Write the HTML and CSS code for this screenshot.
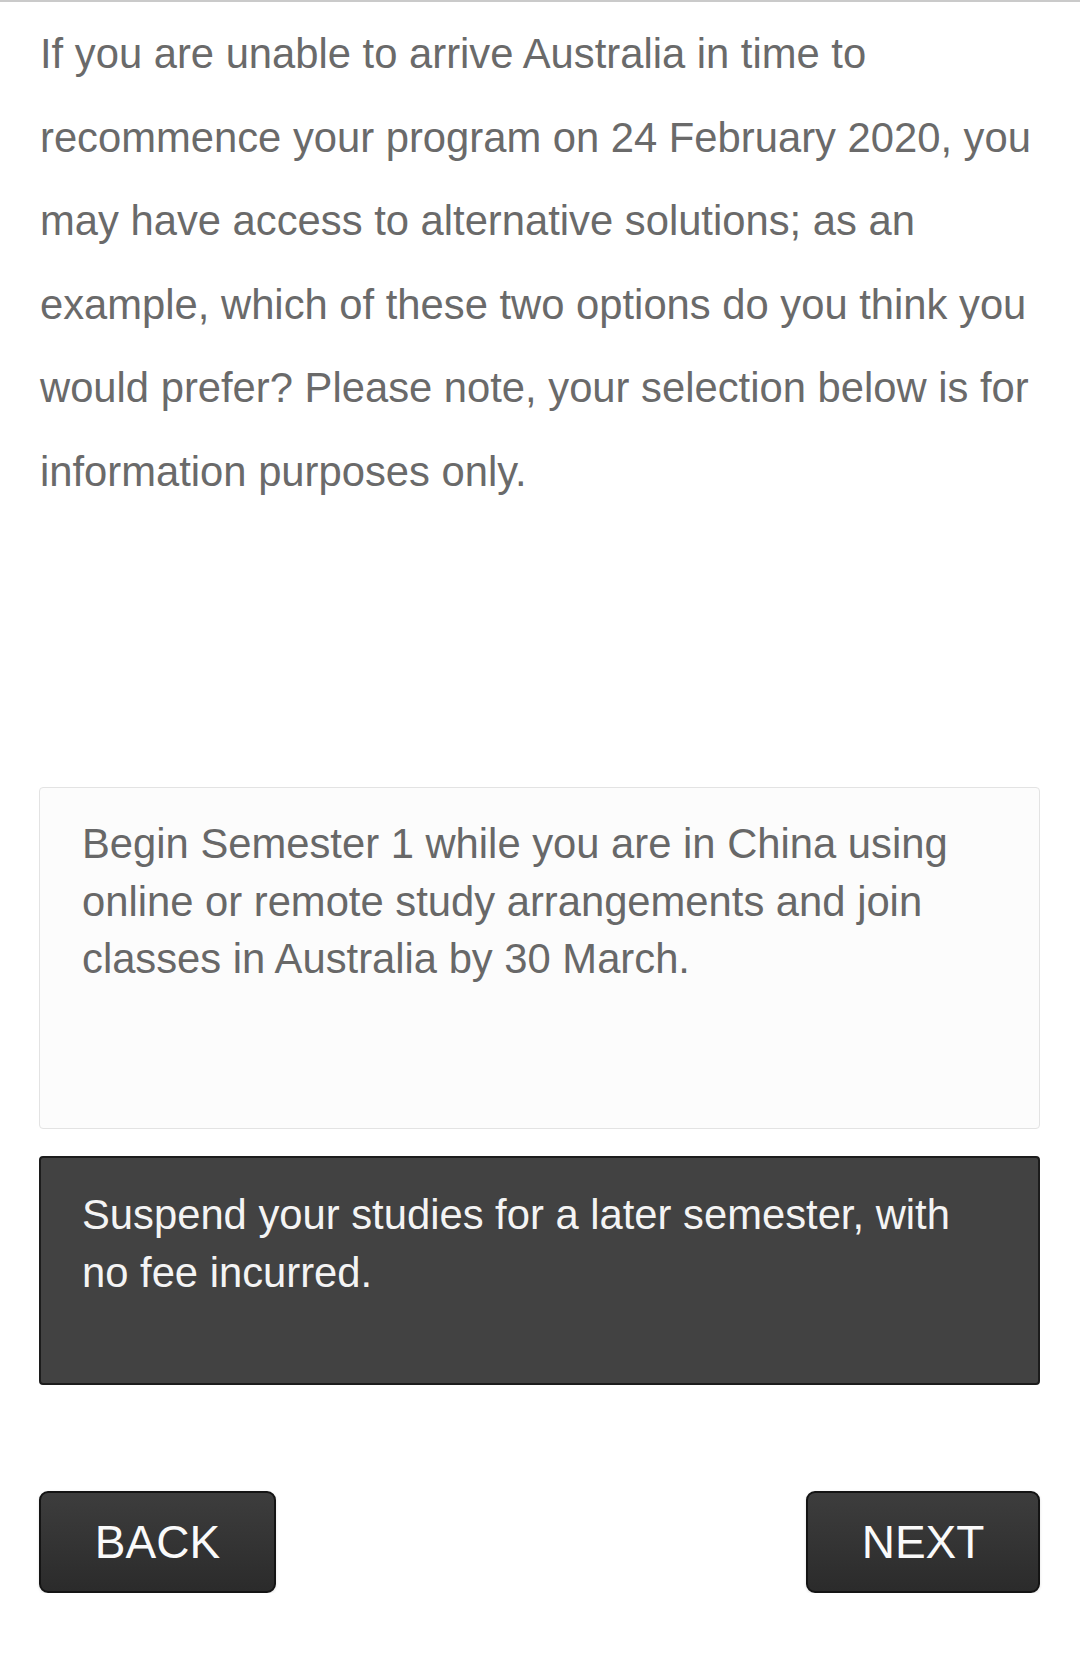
FILE: index.html
```html
<!DOCTYPE html>
<html lang="en">
<head>
  <meta charset="UTF-8">
  <meta name="viewport" content="width=device-width, initial-scale=1.0">
  <title>Semester Options</title>
  <link rel="stylesheet" href="styles.css">
</head>
<body>

  <div class="page">

    <!-- Question -->
    <p class="question">If you are unable to arrive Australia in time to recommence your program on 24 February 2020, you may have access to alternative solutions; as an example, which of these two options do you think you would prefer? Please note, your selection below is for information purposes only.</p>

    <!-- Options -->
    <div class="options">
      <div class="option option-first">Begin Semester 1 while you are in China using online or remote study arrangements and join classes in Australia by 30 March.</div>
      <div class="option option-second selected">Suspend your studies for a later semester, with no fee incurred.</div>
    </div>

    <!-- Navigation -->
    <div class="nav-buttons">
      <button class="nav-btn back-btn">BACK</button>
      <button class="nav-btn next-btn">NEXT</button>
    </div>

  </div>

</body>
</html>
```

FILE: styles.css
```css
/* Reset some default styles */
* {
  margin: 0;
  padding: 0;
  box-sizing: border-box;
}

body {
  font-family: "Liberation Sans", Arial, sans-serif;
  background: #fff;
  color: #666;
  border-top: 2px solid #cacaca;
}

.page {
  padding: 0 40px 0 39px;
}

/* Question text */
.question {
  padding: 10px 0 0 1px;
  font-size: 41.75px;
  line-height: 83.5px;
  color: #6a6a6a;
}

/* Option boxes */
.options {
  margin-top: 274px;
  display: flex;
  flex-direction: column;
  gap: 27px;
}

.option {
  font-size: 41.75px;
  line-height: 57.5px;
  padding: 27px 40px 0 42px;
  border-radius: 4px;
}

.option-first {
  height: 342px;
  background: #fcfcfc;
  border: 1px solid #e3e3e3;
  color: #686868;
}

.option-second {
  height: 229px;
}

.option.selected {
  background: #424242;
  border: 2px solid #1c1c1c;
  color: #f4f4f4;
  padding-top: 28px;
  padding-left: 41px;
}

/* Back / Next buttons */
.nav-buttons {
  margin-top: 106px;
  display: flex;
  justify-content: space-between;
}

.nav-btn {
  height: 102px;
  font-family: "Liberation Sans", Arial, sans-serif;
  font-size: 46px;
  color: #fafafa;
  background: linear-gradient(to bottom, #3d3d3d, #2b2b2b);
  border: 2px solid #141414;
  border-radius: 9px;
  box-shadow: 0 1px 3px rgba(0, 0, 0, 0.12);
  cursor: pointer;
}

.back-btn {
  width: 237px;
}

.next-btn {
  width: 234px;
}
```
